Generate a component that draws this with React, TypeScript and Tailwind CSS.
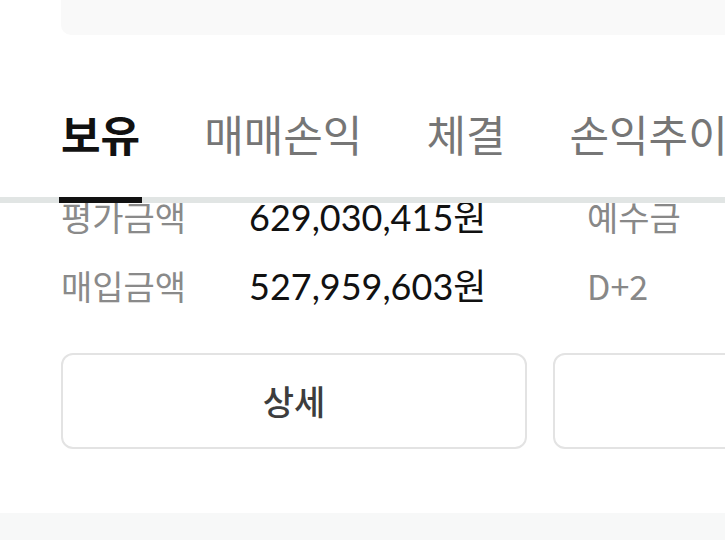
const TABS = ["보유", "매매손익", "체결", "손익추이"];

const ROWS = [
  { label: "평가금액", value: "629,030,415원", side: "예수금" },
  { label: "매입금액", value: "527,959,603원", side: "D+2" },
];

const KR = "font-['Noto_Sans_CJK_KR',sans-serif]";
const NUM = "font-['Lato','Noto_Sans_CJK_KR',sans-serif]";

function TabBar({ active }: { active: number }) {
  return (
    <div className="flex gap-[60px] border-b-[6px] border-[#e1e5e4] pl-[59px] pt-[77px]">
      {TABS.map((tab, i) => (
        <div
          key={tab}
          className={
            i === active
              ? "-mb-[6px] shrink-0 border-b-[6px] border-[#111] px-[2px] pb-[42px]"
              : "shrink-0 px-[2px] pb-[42px]"
          }
        >
          <span
            className={
              i === active
                ? `${KR} block whitespace-nowrap text-[43px] font-bold leading-none text-[#111]`
                : `${KR} block whitespace-nowrap text-[43px] font-normal leading-none text-[#767676]`
            }
          >
            {tab}
          </span>
        </div>
      ))}
    </div>
  );
}

function SummaryRows() {
  return (
    <div className="h-[150px] overflow-hidden">
      <div className="-mt-[21px] pl-[61px]">
        {ROWS.map((row) => (
          <div key={row.label} className="flex h-[69px] items-center">
            <span className={`${KR} w-[188px] shrink-0 text-[34px] leading-none text-[#8a8a8a]`}>
              {row.label}
            </span>
            <span className={`${NUM} w-[338px] shrink-0 whitespace-nowrap text-[36px] leading-none text-[#111]`}>
              {row.value}
            </span>
            <span className={`${KR} shrink-0 whitespace-nowrap text-[34px] leading-none text-[#888]`}>
              {row.side}
            </span>
          </div>
        ))}
      </div>
    </div>
  );
}

function ActionButtons() {
  return (
    <div className="flex gap-[26px] pl-[61px]">
      <button className="flex h-[96px] w-[466px] shrink-0 items-center justify-center rounded-[12px] border-2 border-[#e3e3e3] bg-white">
        <span className={`${KR} text-[34px] font-medium leading-none text-[#3d3d3d]`}>상세</span>
      </button>
      <button className="h-[96px] w-[466px] shrink-0 rounded-[12px] border-2 border-[#e3e3e3] bg-white" />
    </div>
  );
}

export default function App() {
  return (
    <div className="h-[556px] w-[725px] overflow-hidden bg-white">
      <div className="ml-[61px] h-[35px] rounded-bl-[10px] bg-[#f9f9f9]" />
      <TabBar active={0} />
      <SummaryRows />
      <ActionButtons />
      <div className="mt-[64px] h-[27px] bg-[#f7f8f8]" />
    </div>
  );
}
